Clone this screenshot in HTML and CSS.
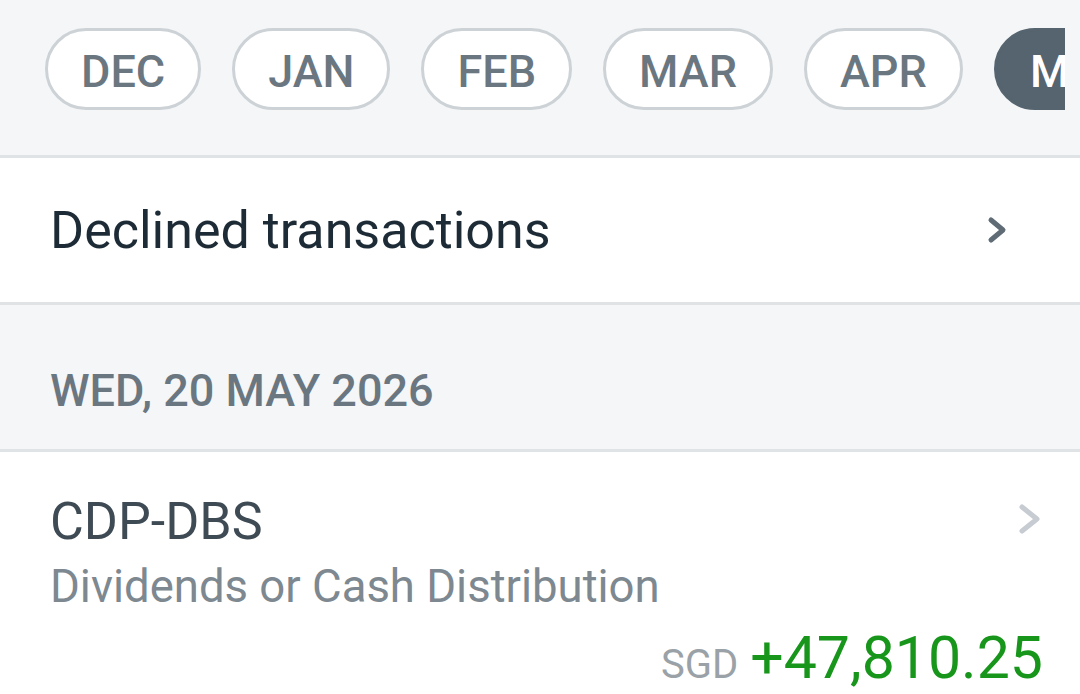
FILE: index.html
```html
<!DOCTYPE html>
<html lang="en">
<head>
    <meta charset="UTF-8">
    <meta name="viewport" content="width=device-width, initial-scale=1.0">
    <title>Transactions</title>
    <link rel="stylesheet" href="styles.css">
</head>
<body>
    <div class="month-bar">
        <div class="months">
            <button class="month">DEC</button>
            <button class="month">JAN</button>
            <button class="month">FEB</button>
            <button class="month">MAR</button>
            <button class="month">APR</button>
            <button class="month active">MAY</button>
        </div>
    </div>

    <a class="row declined" href="#">
        <span>Declined transactions</span>
        <svg class="chevron" width="22" height="30" viewBox="0 0 22 30">
            <polyline points="5,5 17,15 5,25" />
        </svg>
    </a>

    <div class="date-header">WED, 20 MAY 2026</div>

    <a class="txn" href="#">
        <div class="txn-top">
            <div class="txn-info">
                <div class="txn-name">CDP-DBS</div>
                <div class="txn-type">Dividends or Cash Distribution</div>
            </div>
            <svg class="chevron light" width="26" height="34" viewBox="0 0 26 34">
                <polyline points="5,5 20,17 5,29" />
            </svg>
        </div>
        <div class="txn-amount">
            <span class="currency">SGD</span>
            <span class="value">+47,810.25</span>
        </div>
    </a>
</body>
</html>
```

FILE: styles.css
```css
body {
    font-family: 'Roboto', 'Liberation Sans', sans-serif;
    margin: 0;
    padding: 0;
    background-color: #fff;
    color: #1d2b36;
    width: 1080px;
    overflow: hidden;
}

.month-bar {
    background-color: #f4f6f8;
    border-bottom: 3px solid #dfe3e6;
    padding: 28px 15px 45px 45px;
}

/* month picker, scrolls sideways */
.months {
    display: flex;
    gap: 31px;
    overflow: hidden;
}

.month {
    flex-shrink: 0;
    height: 82px;
    padding: 4px 33px 0;
    border: 3px solid #cdd2d6;
    border-radius: 41px;
    background-color: #fff;
    color: #6b7780;
    font-family: inherit;
    font-size: 45px;
    font-weight: 500;
    cursor: pointer;
}

.month.active {
    background-color: #55646e;
    border-color: #55646e;
    color: #fff;
}

.row {
    display: flex;
    align-items: center;
    justify-content: space-between;
    text-decoration: none;
    color: inherit;
}

.declined {
    height: 144px;
    padding: 0 72px 0 50px;
    font-size: 52px;
    color: #1d2b36;
    border-bottom: 3px solid #dfe3e6;
}

.chevron polyline {
    fill: none;
    stroke: #5f6b75;
    stroke-width: 5;
    stroke-linecap: round;
    stroke-linejoin: round;
}

.chevron.light polyline {
    stroke: #c6ccd1;
}

.date-header {
    height: 118px;
    display: flex;
    align-items: center;
    padding: 26px 0 0 50px;
    background-color: #f4f6f8;
    border-bottom: 3px solid #dfe3e6;
    color: #6b7780;
    font-size: 45px;
    font-weight: 500;
}

.txn {
    display: block;
    padding: 40px 37px 0 50px;
    text-decoration: none;
}

.txn-top {
    display: flex;
    justify-content: space-between;
    align-items: flex-start;
}

.txn-name {
    font-size: 52px;
    color: #3e4a54;
    line-height: 60px;
}

.txn-type {
    margin-top: 8px;
    font-size: 45.5px;
    color: #7d8890;
}

.chevron.light {
    margin-top: 10px;
}

.txn-amount {
    display: flex;
    justify-content: flex-end;
    align-items: baseline;
    gap: 12px;
    margin-top: 10px;
}

.currency {
    font-size: 40px;
    color: #9aa2a8;
}

.value {
    font-size: 59px;
    color: #18961c;
}
```
